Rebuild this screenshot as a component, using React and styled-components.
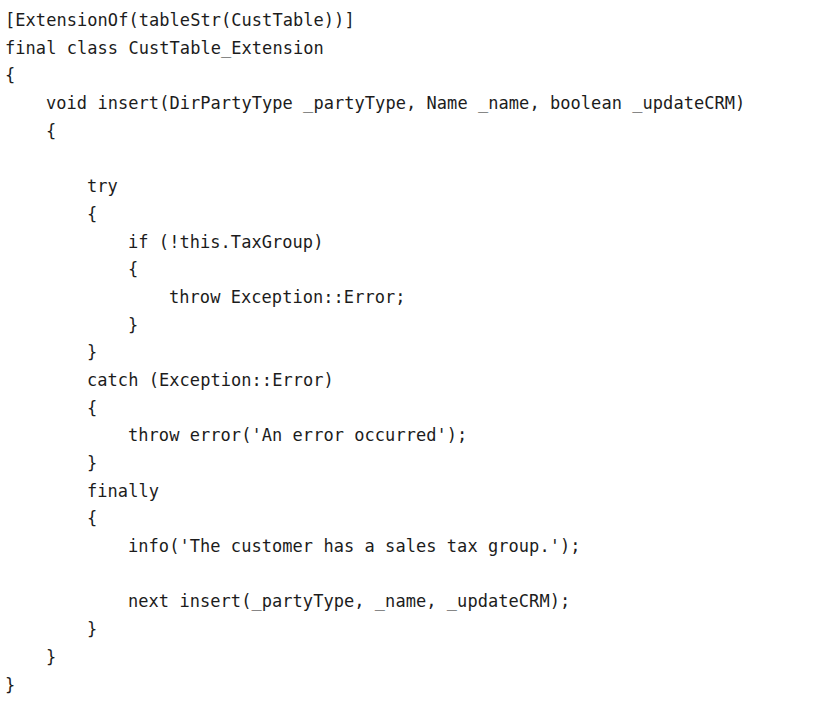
import styled, { createGlobalStyle } from "styled-components";

const GlobalStyle = createGlobalStyle`
  html, body {
    margin: 0;
    padding: 0;
    background: #ffffff;
  }
`;

const Page = styled.div`
  width: 836px;
  height: 702px;
  background: #ffffff;
  overflow: hidden;
`;

const CodeBlock = styled.pre`
  margin: 0;
  padding: 7px 0 0 5px;
  font-family: "DejaVu Sans Mono", "Liberation Mono", monospace;
  font-size: 17px;
  line-height: 27.7px;
  color: #1c1c1c;
  letter-spacing: 0.05px;
`;

const Line = styled.div`
  height: 27.7px;
  padding-left: ${(p) => p.$indent * 41}px;
  white-space: pre;
`;

const lines = [
  [0, "[ExtensionOf(tableStr(CustTable))]"],
  [0, "final class CustTable_Extension"],
  [0, "{"],
  [1, "void insert(DirPartyType _partyType, Name _name, boolean _updateCRM)"],
  [1, "{"],
  [0, ""],
  [2, "try"],
  [2, "{"],
  [3, "if (!this.TaxGroup)"],
  [3, "{"],
  [4, "throw Exception::Error;"],
  [3, "}"],
  [2, "}"],
  [2, "catch (Exception::Error)"],
  [2, "{"],
  [3, "throw error('An error occurred');"],
  [2, "}"],
  [2, "finally"],
  [2, "{"],
  [3, "info('The customer has a sales tax group.');"],
  [0, ""],
  [3, "next insert(_partyType, _name, _updateCRM);"],
  [2, "}"],
  [1, "}"],
  [0, "}"],
];

export default function App() {
  return (
    <>
      <GlobalStyle />
      <Page>
        <CodeBlock>
          {lines.map(([indent, text], i) => (
            <Line key={i} $indent={indent}>
              {text}
            </Line>
          ))}
        </CodeBlock>
      </Page>
    </>
  );
}
